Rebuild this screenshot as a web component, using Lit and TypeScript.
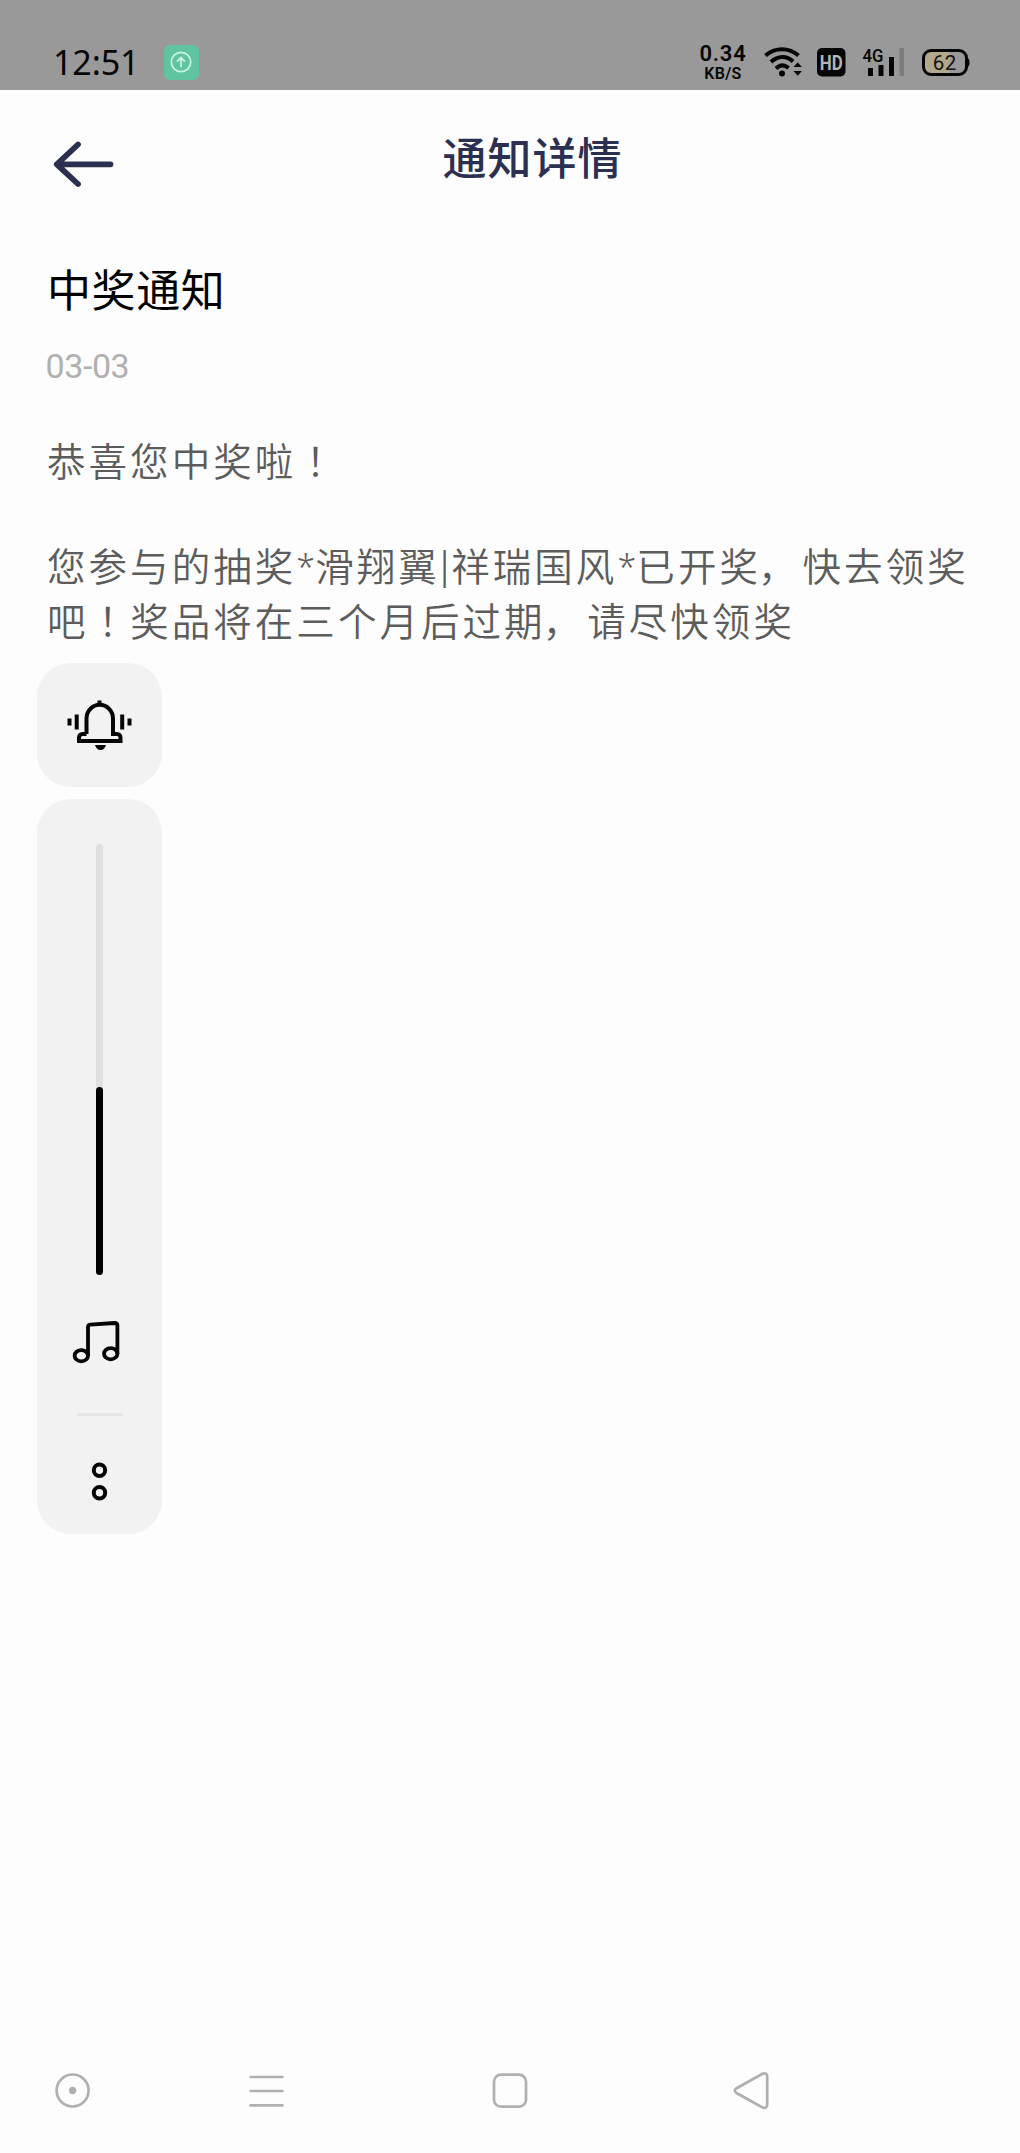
import { LitElement, html, css } from "lit";
import { customElement, property } from "lit/decorators.js";

@customElement("status-bar")
class StatusBar extends LitElement {
  static styles = css`
    :host {
      display: flex;
      align-items: flex-end;
      box-sizing: border-box;
      height: 90px;
      padding: 0 50px 6px 53px;
      background: #999;
      color: #050505;
      font-family: Roboto, "Liberation Sans", sans-serif;
    }
    svg {
      display: block;
      flex: none;
      height: 44px;
      overflow: visible;
    }
    .clock {
      width: 111px;
      height: 44px;
      line-height: 45px;
      font-family: "Noto Sans", "Open Sans", sans-serif;
      font-size: 34px;
      letter-spacing: -0.1px;
      white-space: nowrap;
    }
    .right {
      display: flex;
      margin-left: auto;
    }
    .speed {
      width: 48px;
      height: 44px;
      margin-right: 17px;
      display: flex;
      flex-direction: column;
      align-items: center;
      white-space: nowrap;
      font-weight: 600;
    }
    .rate {
      font-size: 22px;
      line-height: 20px;
      padding-top: 4px;
      letter-spacing: 0.8px;
    }
    .unit {
      margin-top: 1px;
      font-size: 16px;
      line-height: 17px;
      letter-spacing: 0.3px;
    }
    .wifi { margin-right: 14px; }
    .hd { margin-right: 15px; }
    .signal { margin-right: 17px; }
  `;

  render() {
    return html`
      <div class="clock">12:51</div>
      <svg width="35" viewBox="164 40 35 44">
        <rect x="164" y="45" width="35" height="35" rx="6" fill="#60c4a0" />
        <circle cx="181" cy="62" r="9.7" fill="none" stroke="#c9f5e3" stroke-width="1.7" />
        <path d="M181 67.3v-9M177 61.6l4-4 4 4" fill="none" stroke="#c9f5e3" stroke-width="1.8" />
      </svg>
      <div class="right">
        <div class="speed"><span class="rate">0.34</span><span class="unit">KB/S</span></div>
        <svg class="wifi" width="39" viewBox="764 40 39 44">
          <g fill="none" stroke="#050505" stroke-width="4">
            <path d="M765.5 55.5C775 47 789 47 798.500 55.500" />
            <path d="M771 62C778 55.500 786.500 55.500 793 61.500" />
            <path d="M776 68.500C780 64.500 784.500 64.500 788.500 68" />
          </g>
          <circle cx="782" cy="73.500" r="3" fill="#050505" />
          <path d="M793.500 67l4.200-4.800 4.200 4.800zM793.500 71l4.200 4.800 4.200-4.800z" fill="#050505" />
        </svg>
        <svg class="hd" width="29" viewBox="817 40 29 44">
          <rect x="817" y="48" width="28.500" height="28.500" rx="5" fill="#050505" />
          <text x="831.300" y="70" text-anchor="middle" font-size="21" font-weight="700" textLength="23" lengthAdjust="spacingAndGlyphs" fill="#b4b4b4">HD</text>
        </svg>
        <svg class="signal" width="43" viewBox="861 40 43 44">
          <text x="862.500" y="61.800" font-size="19" font-weight="500" textLength="21" lengthAdjust="spacingAndGlyphs" fill="#050505">4G</text>
          <path d="M868 68h5v8h-5zM878.500 65h5v11h-5zM889 57h5v19h-5z" fill="#050505" />
          <path d="M899.500 48h4.500v28h-4.500z" fill="#7c7c7c" />
        </svg>
        <svg width="49" viewBox="921 40 49 44">
          <rect x="923.500" y="50.500" width="43" height="24" rx="7.500" fill="#999" />
          <path d="M931 50.500h19v24h-19a7.500 7.500 0 0 1-7.500-7.500v-9a7.500 7.500 0 0 1 7.500-7.500z" fill="#b1a88f" />
          <rect x="923.500" y="50.500" width="43" height="24" rx="7.500" fill="none" stroke="#050505" stroke-width="3" />
          <path d="M967 57.500q2.500 1 2.500 5t-2.500 5z" fill="#050505" />
          <text x="944.500" y="69.500" text-anchor="middle" font-size="20.500" textLength="23.500" fill="#14120c">62</text>
        </svg>
      </div>
    `;
  }
}

@customElement("volume-panel")
class VolumePanel extends LitElement {
  @property({ type: Number }) level = 0.437;

  static styles = css`
    :host {
      display: flex;
      flex-direction: column;
      gap: 12px;
      width: 125px;
    }
    .card {
      display: flex;
      flex-direction: column;
      align-items: center;
      background: #f2f2f2;
      border-radius: 34px;
    }
    .ring { height: 124px; }
    .sliderCard { height: 735px; }
    .track {
      display: flex;
      flex-direction: column;
      justify-content: flex-end;
      width: 7px;
      height: 431px;
      margin-top: 45px;
      border-radius: 4px;
      background: #e0e0e0;
    }
    .fill {
      border-radius: 4px;
      background: #000;
    }
    .divider {
      width: 46px;
      height: 3px;
      margin-top: 48px;
      background: #e6e6e6;
    }
    svg { display: block; }
    .note { margin-top: 44px; }
    .dots { margin-top: 45px; }
  `;

  render() {
    return html`
      <div class="card ring">
        <svg width="125" height="124" viewBox="37 663 125 124">
          <g fill="none" stroke="#050505" stroke-width="4">
            <path d="M86.500 734V718.500a13 13.500 0 0 1 26.500 0V734h4a3.500 3.500 0 0 1 3.500 3.500V741H79v-3.500a3.500 3.500 0 0 1 3.500-3.500h4" />
            <path d="M99.500 700.500v4M76.700 714.500v15M122.200 714.500v15M69.500 718.500v7M129.500 718.500v7" />
          </g>
          <path d="M95 745h11q-1.500 5-5.500 5T95 745z" fill="#050505" />
        </svg>
      </div>
      <div class="card sliderCard">
        <div class="track"><div class="fill" style="height:${this.level * 100}%"></div></div>
        <svg class="note" width="125" height="46" viewBox="37 1319 125 46">
          <g fill="none" stroke="#050505" stroke-width="3.800" stroke-linejoin="round">
            <ellipse cx="81.300" cy="1355.700" rx="6.700" ry="5.600" />
            <ellipse cx="110.700" cy="1353.700" rx="6.700" ry="5.600" />
            <path d="M88 1356V1327q0-2.200 2.200-2.400L114.500 1323q2.900 0 2.900 2.600V1354" />
          </g>
        </svg>
        <div class="divider"></div>
        <svg class="dots" width="125" height="42" viewBox="37 1461 125 42">
          <g fill="none" stroke="#050505" stroke-width="4">
            <circle cx="99.500" cy="1470.300" r="5.700" />
            <circle cx="99.500" cy="1492.800" r="5.700" />
          </g>
        </svg>
      </div>
    `;
  }
}

@customElement("nav-bar")
class NavBar extends LitElement {
  static styles = css`
    :host {
      display: flex;
      align-items: center;
      height: 44px;
      padding-left: 54px;
    }
    svg {
      display: block;
      flex: none;
      fill: none;
      stroke: #b0b0b0;
      stroke-width: 2.7;
    }
    .recent { margin-left: 157px; }
    .home { margin-left: 206px; }
    .back { margin-left: 204px; }
  `;

  render() {
    return html`
      <svg width="38" height="44" viewBox="54 2069 38 44">
        <circle cx="72.600" cy="2090.500" r="16" />
        <circle cx="72.600" cy="2090.500" r="3.700" fill="#b0b0b0" stroke="none" />
      </svg>
      <svg class="recent" width="36" height="44" viewBox="249 2069 36 44">
        <path d="M249.500 2077h34M249.500 2091h34M249.500 2105.300h34" />
      </svg>
      <svg class="home" width="38" height="44" viewBox="491 2069 38 44">
        <rect x="494" y="2074.700" width="32" height="32" rx="7" />
      </svg>
      <svg class="back" width="38" height="44" viewBox="733 2069 38 44">
        <path d="M762.500 2073.800l-26 14.400q-3.500 2.400 0 4.800l26 14.400q4.500 1.600 4.700-2.600v-28.600q-.2-4-4.700-2.400z" />
      </svg>
    `;
  }
}

@customElement("app-root")
class AppRoot extends LitElement {
  static styles = css`
    :host {
      display: flex;
      flex-direction: column;
      box-sizing: border-box;
      width: 1020px;
      height: 2153px;
      background: #fdfdfd;
      font-family: "Noto Sans CJK SC", sans-serif;
    }
    .header {
      display: grid;
      grid-template-columns: 160px 1fr 160px;
      height: 134px;
      color: #2c3050;
    }
    .arrow { margin: 48px 0 0 50px; display: block; }
    .title {
      margin: 0;
      padding-top: 34px;
      padding-left: 45px;
      text-align: center;
      font-size: 44px;
      line-height: 64px;
      font-weight: 500;
      letter-spacing: 1px;
    }
    .content { padding: 32px 0 0 47px; }
    .subject {
      margin: 0;
      font-size: 44px;
      line-height: 64px;
      font-weight: 400;
      letter-spacing: 0.6px;
      color: #000;
    }
    .date {
      margin: 23px 0 0 -1.5px;
      font-family: Roboto, sans-serif;
      font-weight: 400;
      font-size: 34px;
      letter-spacing: -0.4px;
      line-height: 46px;
      color: #b0b0b0;
    }
    .body {
      margin: 0;
      font-size: 38.5px;
      line-height: 55px;
      letter-spacing: 3.05px;
      font-weight: 350;
      color: #5c5c5c;
      white-space: nowrap;
    }
    .greeting { margin-top: 43px; }
    .message { margin-top: 50px; }
    .star {
      font-family: "Noto Sans", sans-serif;
      font-size: 34px;
      line-height: 0;
      letter-spacing: 0.2px;
      vertical-align: 1px;
    }
    .bar {
      font-size: 34px;
      font-weight: 400;
      line-height: 0;
      letter-spacing: 2.1px;
      vertical-align: 2px;
    }
    .bang { font-family: "Noto Sans CJK TC", sans-serif; line-height: 0; }
    .comma { margin: 0 3px 0 -3px; }
    .volume { margin: 16px 0 0 37px; }
    .nav { margin-top: auto; margin-bottom: 40px; }
  `;

  render() {
    return html`
      <status-bar></status-bar>
      <header class="header">
        <svg class="arrow" width="68" height="52" viewBox="50 138 68 52" fill="none" stroke="#2c3050" stroke-width="5.800" stroke-linecap="round" stroke-linejoin="round">
          <path d="M78 144.500L56.800 164.300 78 184M58 164.300h52.500" />
        </svg>
        <h1 class="title">通知详情</h1>
      </header>
      <main class="content">
        <h2 class="subject">中奖通知</h2>
        <div class="date">03-03</div>
        <p class="body greeting">恭喜您中奖啦<span class="bang" lang="zh-TW">！</span></p>
        <p class="body message">您参与的抽奖<span class="star">*</span>滑翔翼<span class="bar">|</span>祥瑞国风<span class="star">*</span>已开奖<span class="comma">，</span>快去领奖<br />吧<span class="bang" lang="zh-TW">！</span>奖品将在三个月后过期<span class="comma">，</span>请尽快领奖</p>
      </main>
      <volume-panel class="volume"></volume-panel>
      <nav-bar class="nav"></nav-bar>
    `;
  }
}
